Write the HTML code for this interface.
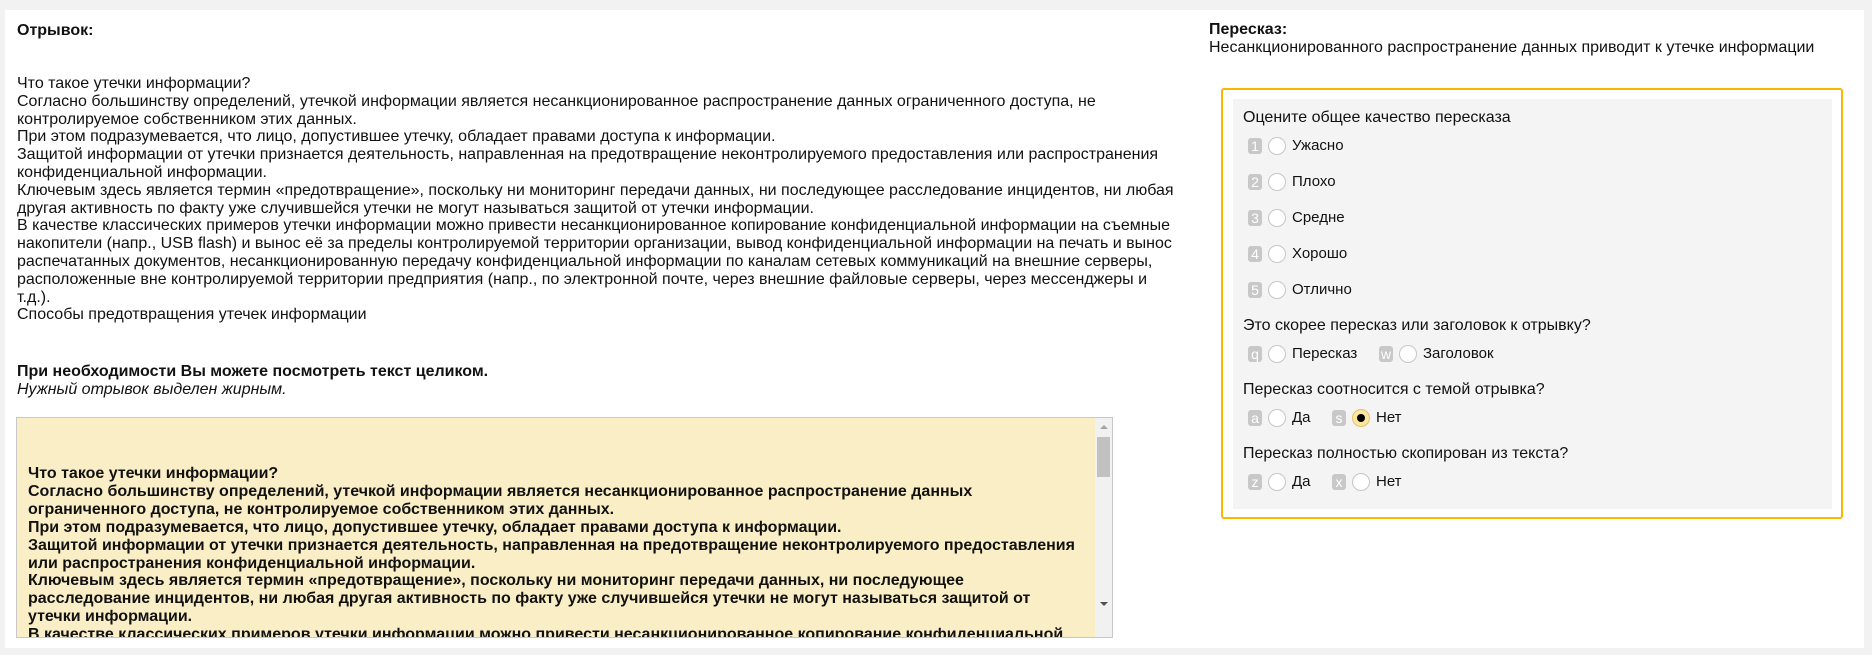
<!DOCTYPE html>
<html><head><meta charset="utf-8"><style>
body{margin:0;width:1872px;height:655px;background:#f2f2f2;font-family:"Liberation Sans",Arial,sans-serif;color:#111;overflow:hidden;position:relative}
.page{position:absolute;left:5px;top:10px;width:1859px;height:638px;background:#fff}
.a{position:absolute;white-space:nowrap;font-size:16px}
.left{position:absolute;left:17px;top:75px;width:1180px;font-size:16px;line-height:17.8px}
.ta{position:absolute;left:16px;top:417px;width:1095px;height:219px;border:1px solid #c8c8c8;background:#faeec6;overflow:hidden}
.ta .t{position:absolute;left:11px;top:47px;width:1070px;font-weight:bold;font-size:16px;line-height:17.9px}
.sb{position:absolute;right:0;top:0;width:17px;height:100%;background:#f1f1f1}
.box{position:absolute;left:1221px;top:88px;width:618px;height:427px;border:2px solid #f7b900;border-radius:3px}
.gray{position:absolute;left:1233px;top:99px;width:599px;height:410px;background:#f4f4f4}
.q{position:absolute;left:1243px;font-size:16px;white-space:nowrap}
.opt{position:absolute;height:17px;font-size:15px;white-space:nowrap}
.k{position:absolute;left:0;top:0;width:14px;height:16px;background:#c8c8c8;border-radius:3px;color:#fff;font-size:14px;line-height:16px;text-align:center}
.r{position:absolute;left:20px;top:-1px;width:16px;height:16px;border:1px solid #c6c6c6;border-radius:50%;background:#fff}
.r.on{background:#fde6a0;border-color:#e3c36a}
.r.on:after{content:"";position:absolute;left:4px;top:4px;width:8px;height:8px;border-radius:50%;background:#000}
.l{position:absolute;left:44px;top:-1px}
</style></head><body>
<div class="page"></div>
<div class="a" style="left:17px;top:22px;font-weight:bold">Отрывок:</div>
<div class="left">Что такое утечки информации?<br>Согласно большинству определений, утечкой информации является несанкционированное распространение данных ограниченного доступа, не<br>контролируемое собственником этих данных.<br>При этом подразумевается, что лицо, допустившее утечку, обладает правами доступа к информации.<br>Защитой информации от утечки признается деятельность, направленная на предотвращение неконтролируемого предоставления или распространения<br>конфиденциальной информации.<br>Ключевым здесь является термин «предотвращение», поскольку ни мониторинг передачи данных, ни последующее расследование инцидентов, ни любая<br>другая активность по факту уже случившейся утечки не могут называться защитой от утечки информации.<br>В качестве классических примеров утечки информации можно привести несанкционированное копирование конфиденциальной информации на съемные<br>накопители (напр., USB flash) и вынос её за пределы контролируемой территории организации, вывод конфиденциальной информации на печать и вынос<br>распечатанных документов, несанкционированную передачу конфиденциальной информации по каналам сетевых коммуникаций на внешние серверы,<br>расположенные вне контролируемой территории предприятия (напр., по электронной почте, через внешние файловые серверы, через мессенджеры и<br>т.д.).<br>Способы предотвращения утечек информации</div>
<div class="a" style="left:17px;top:363px;font-weight:bold">При необходимости Вы можете посмотреть текст целиком.</div>
<div class="a" style="left:17px;top:381px;font-style:italic">Нужный отрывок выделен жирным.</div>
<div class="ta"><div class="t">Что такое утечки информации?<br>Согласно большинству определений, утечкой информации является несанкционированное распространение данных<br>ограниченного доступа, не контролируемое собственником этих данных.<br>При этом подразумевается, что лицо, допустившее утечку, обладает правами доступа к информации.<br>Защитой информации от утечки признается деятельность, направленная на предотвращение неконтролируемого предоставления<br>или распространения конфиденциальной информации.<br>Ключевым здесь является термин «предотвращение», поскольку ни мониторинг передачи данных, ни последующее<br>расследование инцидентов, ни любая другая активность по факту уже случившейся утечки не могут называться защитой от<br>утечки информации.<br>В качестве классических примеров утечки информации можно привести несанкционированное копирование конфиденциальной</div>
<div class="sb"><div style="position:absolute;left:2px;top:19px;width:13px;height:40px;background:#c1c1c1"></div><div style="position:absolute;left:5px;top:7px;width:0;height:0;border:4px solid transparent;border-bottom-color:#a3a3a3;border-top:0"></div><div style="position:absolute;left:5px;top:184px;width:0;height:0;border:4px solid transparent;border-top-color:#505050;border-bottom:0"></div></div></div>
<div class="a" style="left:1209px;top:21px;font-weight:bold">Пересказ:</div>
<div class="a" style="left:1209px;top:39px">Несанкционированного распространение данных приводит к утечке информации</div>
<div class="box"></div><div class="gray"></div>
<div class="q" style="top:109px">Оцените общее качество пересказа</div>
<div class="opt" style="left:1248px;top:138px"><span class="k">1</span><span class="r"></span><span class="l">Ужасно</span></div>
<div class="opt" style="left:1248px;top:174px"><span class="k">2</span><span class="r"></span><span class="l">Плохо</span></div>
<div class="opt" style="left:1248px;top:210px"><span class="k">3</span><span class="r"></span><span class="l">Средне</span></div>
<div class="opt" style="left:1248px;top:246px"><span class="k">4</span><span class="r"></span><span class="l">Хорошо</span></div>
<div class="opt" style="left:1248px;top:282px"><span class="k">5</span><span class="r"></span><span class="l">Отлично</span></div>
<div class="q" style="top:317px">Это скорее пересказ или заголовок к отрывку?</div>
<div class="opt" style="left:1248px;top:346px"><span class="k">q</span><span class="r"></span><span class="l">Пересказ</span></div>
<div class="opt" style="left:1379px;top:346px"><span class="k">w</span><span class="r"></span><span class="l">Заголовок</span></div>
<div class="q" style="top:381px">Пересказ соотносится с темой отрывка?</div>
<div class="opt" style="left:1248px;top:410px"><span class="k">a</span><span class="r"></span><span class="l">Да</span></div>
<div class="opt" style="left:1332px;top:410px"><span class="k">s</span><span class="r on"></span><span class="l">Нет</span></div>
<div class="q" style="top:445px">Пересказ полностью скопирован из текста?</div>
<div class="opt" style="left:1248px;top:474px"><span class="k">z</span><span class="r"></span><span class="l">Да</span></div>
<div class="opt" style="left:1332px;top:474px"><span class="k">x</span><span class="r"></span><span class="l">Нет</span></div>
</body></html>
